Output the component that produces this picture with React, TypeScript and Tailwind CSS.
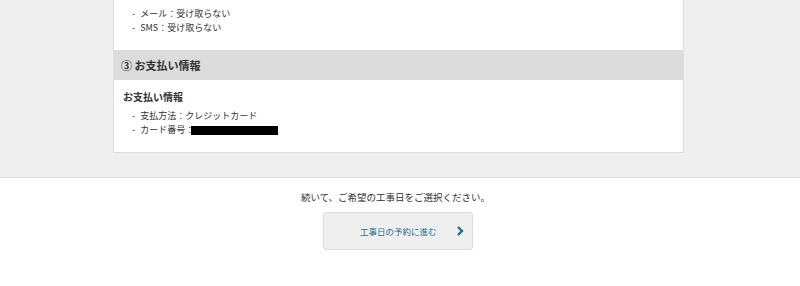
const font = { fontFamily: '"Noto Sans CJK JP", "Noto Sans", sans-serif' };

function Item({ children }: { children: React.ReactNode }) {
  return (
    <li className="flex items-center h-[14px]">
      <span className="mr-[5px]">-</span>
      {children}
    </li>
  );
}

export default function App() {
  return (
    <div className="w-[800px] h-[286px] overflow-hidden bg-white text-[#333]" style={font}>
      <div className="bg-[#efefef] border-b border-[#dcdcdc] pb-6">
        <div className="w-[571px] ml-[113px] bg-white border-x border-b border-[#dedede]">
          <ul className="pl-[18px] pt-[7px] pb-[15px] text-[9px] leading-[14px]">
            <Item>メール：受け取らない</Item>
            <Item>SMS：受け取らない</Item>
          </ul>
          <div className="h-[30px] bg-[#dcdcdc] flex items-center px-[7px] text-[11px] font-bold">
            ③ お支払い情報
          </div>
          <div className="px-[9px] pt-[10px] pb-[15px]">
            <h3 className="text-[10px] font-bold leading-[14px]">お支払い情報</h3>
            <ul className="pl-[9px] mt-[5px] text-[9px] leading-[14px]">
              <Item>支払方法：クレジットカード</Item>
              <Item>
                カード番号：
                <span className="inline-block w-[87px] h-[9px] bg-black -ml-[3px]" />
              </Item>
            </ul>
          </div>
        </div>
      </div>
      <div className="flex flex-col items-center pt-[12px]">
        <p className="text-[9.5px] leading-[14px] -ml-[9px]">続いて、ご希望の工事日をご選択ください。</p>
        <button className="mt-[8px] -ml-[4px] w-[150px] h-[38px] bg-[#efefef] border border-[#dcdcdc] rounded-[3px] flex items-center pl-[36px] pr-[6px] text-[8.5px] text-[#2b6e8c]">
          <span>工事日の予約に進む</span>
          <svg className="ml-auto mr-[2px]" width="7" height="10" viewBox="0 0 7 10">
            <path d="M1 1 L5 5 L1 9" fill="none" stroke="#1f6f86" strokeWidth="2.4" />
          </svg>
        </button>
      </div>
    </div>
  );
}
